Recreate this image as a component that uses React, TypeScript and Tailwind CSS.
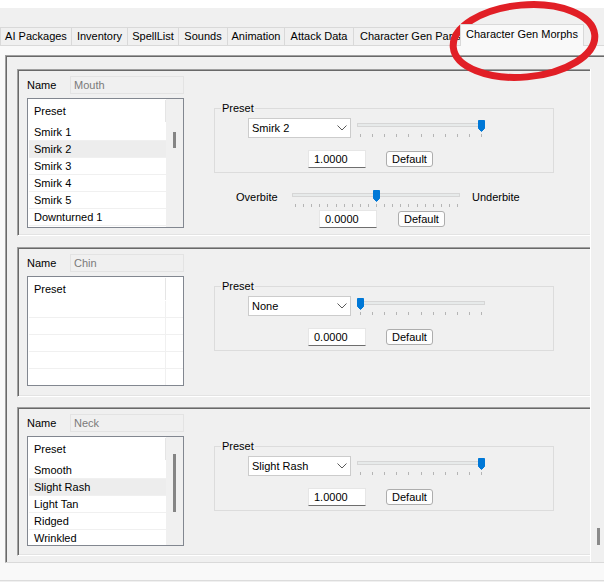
import React from 'react';

const TABS = [
  { label: 'AI Packages', cls: 'w-[72px] justify-center' },
  { label: 'Inventory', cls: 'w-[57px] -ml-px justify-center' },
  { label: 'SpellList', cls: 'w-[52px] -ml-px justify-center' },
  { label: 'Sounds', cls: 'w-[50px] -ml-px justify-center' },
  { label: 'Animation', cls: 'w-[58px] -ml-px justify-center' },
  { label: 'Attack Data', cls: 'w-[70px] -ml-px justify-center' },
  { label: 'Character Gen Parts', cls: 'w-[110px] -ml-px pl-[6px]' },
];

function Slider({ width, ticks, step, thumb }: { width: number; ticks: number; step: number; thumb: number }) {
  return (
    <svg width={width} height={19} className="block shrink-0">
      <rect x={0.5} y={4.5} width={width - 1} height={3} fill="#e7eaea" stroke="#d6d6d6" />
      {Array.from({ length: ticks }, (_, i) => {
        const x = Math.round(3 + i * step) + 0.5;
        return <line key={i} x1={x} x2={x} y1={15} y2={18} stroke="#b5b5b5" />;
      })}
      <path d={`M${thumb + 0.5} 1.5h6v8l-3 3l-3 -3z`} fill="#0078d7" stroke="#0078d7" strokeLinejoin="round" />
    </svg>
  );
}

function Combo({ value }: { value: string }) {
  return (
    <div className="flex h-[20px] w-[103px] shrink-0 items-center justify-between border border-[#cccccc] bg-white pl-[3px] pr-[3px]">
      <span>{value}</span>
      <svg width="10" height="6" viewBox="0 0 10 6">
        <path d="M0.5 0.5L5 5L9.5 0.5" fill="none" stroke="#5a5a5a" />
      </svg>
    </div>
  );
}

function ValueBox({ value }: { value: string }) {
  return (
    <div className="flex h-[18px] w-[58px] shrink-0 items-center border border-[#e6e6e6] border-b-[#6e6e6e] bg-white pl-[5px]">
      {value}
    </div>
  );
}

function DefaultButton() {
  return (
    <div className="flex h-[16px] w-[47px] shrink-0 items-center justify-center rounded-[3px] border border-[#adadad] bg-[#fdfdfd]">
      Default
    </div>
  );
}

function PresetGroup({ combo, value, thumb }: { combo: string; value: string; thumb: number }) {
  return (
    <div className="relative h-[65px] w-[340px] border border-[#dcdcdc] pl-[33px] pt-[9px]">
      <span className="absolute -top-[7px] left-[6px] bg-[#f0f0f0] px-px">Preset</span>
      <div className="flex">
        <Combo value={combo} />
        <div className="ml-[6px] mt-px">
          <Slider width={128} ticks={11} step={12.1} thumb={thumb} />
        </div>
      </div>
      <div className="mt-[12px] flex items-center pl-[60px]">
        <ValueBox value={value} />
        <div className="ml-[20px]">
          <DefaultButton />
        </div>
      </div>
    </div>
  );
}

function PresetList({
  items,
  selected,
  h,
  thumb,
}: {
  items: string[];
  selected?: string;
  h: string;
  thumb?: string;
}) {
  if (!thumb) {
    return (
      <div className={`mt-[4px] w-[157px] overflow-hidden border border-[#828790] bg-white ${h}`}>
        <div className="flex h-[24px]">
          <div className="my-px flex w-[138px] items-center border-r border-[#e5e5e5] pl-[6px]">Preset</div>
        </div>
        {[0, 1, 2, 3, 4].map((i) => (
          <div key={i} className="ml-px flex h-[17px] border-b border-[#f0f0f0]">
            <div className="w-[137px] border-r border-[#f0f0f0]" />
          </div>
        ))}
      </div>
    );
  }
  return (
    <div className={`mt-[4px] flex w-[157px] overflow-hidden border border-[#828790] bg-white ${h}`}>
      <div className="w-[138px] shrink-0 overflow-hidden">
        <div className="my-px flex h-[22px] items-center border-r border-[#e5e5e5] pl-[6px]">Preset</div>
        <div className="h-px" />
        {items.map((it) => (
          <div
            key={it}
            className={`ml-px flex h-[17px] items-center border-b border-[#f0f0f0] pl-[5px] ${
              it === selected ? 'bg-[#ededed]' : ''
            }`}
          >
            {it}
          </div>
        ))}
      </div>
      <div className="w-[17px] shrink-0 bg-[#f0f0f0]">
        <div className={`ml-[7px] w-[3px] bg-[#858585] ${thumb}`} />
      </div>
    </div>
  );
}

function Section({
  name,
  cls,
  list,
  children,
}: {
  name: string;
  cls: string;
  list: React.ReactNode;
  children: React.ReactNode;
}) {
  return (
    <div
      className={`flex w-[573px] shrink-0 border-b border-l border-t border-b-white border-l-[#a0a0a0] border-t-[#a0a0a0] shadow-[inset_1px_1px_0_#696969,inset_0_-1px_0_#e3e3e3] ${cls}`}
    >
      <div className="pl-[9px] pt-[6px]">
        <div className="flex h-[18px] items-center">
          <span className="w-[43px]">Name</span>
          <div className="flex h-[18px] w-[114px] items-center border border-[#e3e3e3] bg-[#f0f0f0] pl-[3px] text-[#7a7a7a]">
            {name}
          </div>
        </div>
        {list}
      </div>
      <div className="pl-[30px] pt-[38px]">{children}</div>
    </div>
  );
}

export default function App() {
  return (
    <div className="relative h-[582px] w-[604px] overflow-hidden bg-[#f0f0f0] font-['Liberation_Sans',Arial,sans-serif] text-[11px] leading-[13px] text-black">
      <div className="h-[8px] bg-white" />

      {/* tab strip */}
      <div className="flex h-[37px] items-end">
        {TABS.map((t) => (
          <div
            key={t.label}
            className={`flex h-[18px] shrink-0 items-center overflow-hidden whitespace-nowrap border-l border-r border-t border-[#d9d9d9] bg-[#f0f0f0] ${t.cls}`}
          >
            {t.label}
          </div>
        ))}
        <div className="relative z-10 -mb-px -ml-[3px] flex h-[22px] w-[124px] shrink-0 justify-center whitespace-nowrap border-l border-r border-t border-[#d9d9d9] bg-[#f9f9f9] pt-[3px]">
          Character Gen Morphs
        </div>
      </div>

      {/* tab page */}
      <div className="h-[536px] border-b border-t border-b-[#dcdcdc] border-t-[#d9d9d9] bg-[#f9f9f9] pl-[5px] pt-[9px]">
        <div className="flex h-[508px] border-b border-l border-t border-b-[#dadada] border-l-[#a0a0a0] border-t-[#a0a0a0] bg-[#f0f0f0] shadow-[inset_1px_1px_0_#696969]">
          <div className="flex w-[584px] shrink-0 flex-col overflow-hidden pl-[11px] pt-[13px]">
            <Section
              name="Mouth"
              cls="h-[167px]"
              list={
                <PresetList
                  h="h-[130px]"
                  items={['Smirk 1', 'Smirk 2', 'Smirk 3', 'Smirk 4', 'Smirk 5', 'Downturned 1']}
                  selected="Smirk 2"
                  thumb="mt-[33px] h-[16px]"
                />
              }
            >
              <PresetGroup combo="Smirk 2" value="1.0000" thumb={121} />
              <div className="mt-[16px] flex items-start">
                <span className="ml-[22px] w-[56px] pt-[2px]">Overbite</span>
                <Slider width={168} ticks={21} step={8.1} thumb={81} />
                <span className="ml-[12px] pt-[2px]">Underbite</span>
              </div>
              <div className="mt-[2px] flex items-center pl-[105px]">
                <ValueBox value="0.0000" />
                <div className="ml-[21px]">
                  <DefaultButton />
                </div>
              </div>
            </Section>

            <Section name="Chin" cls="mt-[11px] h-[150px]" list={<PresetList h="h-[110px]" items={[]} />}>
              <PresetGroup combo="None" value="0.0000" thumb={0} />
            </Section>

            <Section
              name="Neck"
              cls="mt-[10px] h-[149px]"
              list={
                <PresetList
                  h="h-[110px]"
                  items={['Smooth', 'Slight Rash', 'Light Tan', 'Ridged', 'Wrinkled']}
                  selected="Slight Rash"
                  thumb="mt-[17px] h-[58px]"
                />
              }
            >
              <PresetGroup combo="Slight Rash" value="1.0000" thumb={121} />
            </Section>
          </div>

          {/* outer vertical scrollbar */}
          <div className="mt-[13px] flex-1 border-l border-white">
            <div className="ml-[6px] mt-[459px] h-[17px] w-[3px] bg-[#8a8a8a]" />
          </div>
        </div>
      </div>

      {/* red annotation */}
      <svg className="pointer-events-none absolute left-0 top-0" width="604" height="582">
        <ellipse
          cx="524"
          cy="41"
          rx="71"
          ry="36"
          transform="rotate(-5 524 41)"
          fill="none"
          stroke="#e11f26"
          strokeWidth="7"
        />
      </svg>
    </div>
  );
}
